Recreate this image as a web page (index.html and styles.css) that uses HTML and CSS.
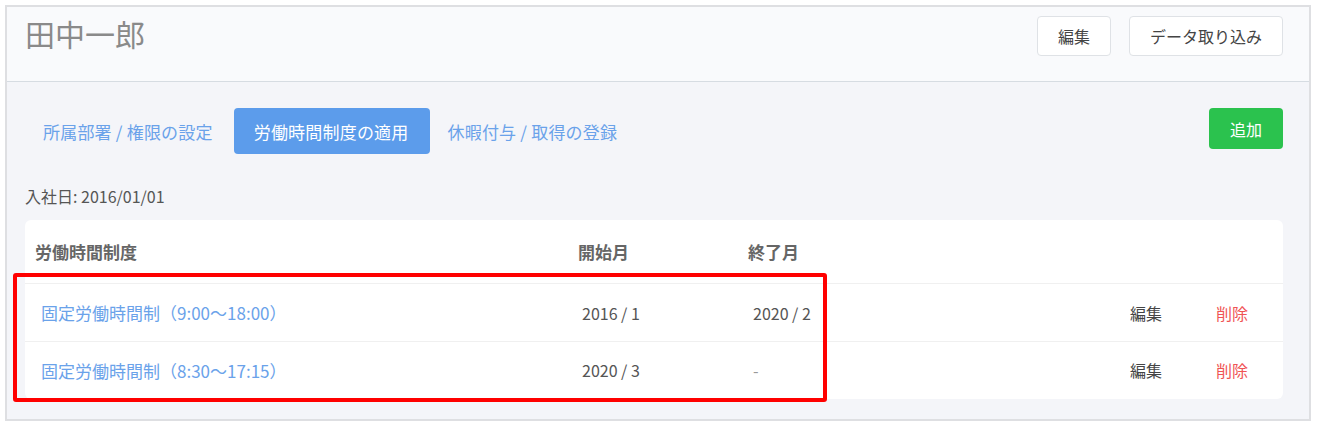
FILE: index.html
```html
<!DOCTYPE html>
<html lang="ja">
<head>
<meta charset="utf-8">
<link rel="stylesheet" href="styles.css">
</head>
<body>
<div class="frame">
  <header class="head">
    <h1 class="name">田中一郎</h1>
    <div class="head-actions">
      <button class="btn">編集</button>
      <button class="btn">データ取り込み</button>
    </div>
  </header>
  <main class="content">
    <div class="toolbar">
      <nav class="tabs">
        <a class="tab">所属部署 / 権限の設定</a>
        <a class="tab active">労働時間制度の適用</a>
        <a class="tab">休暇付与 / 取得の登録</a>
      </nav>
      <button class="btn-add">追加</button>
    </div>
    <p class="joined">入社日: 2016/01/01</p>
    <div class="card">
      <div class="thead">
        <div>労働時間制度</div>
        <div>開始月</div>
        <div>終了月</div>
      </div>
      <div class="row">
        <a class="link">固定労働時間制（9:00〜18:00）</a>
        <div>2016 / 1</div>
        <div>2020 / 2</div>
        <a class="act">編集</a>
        <a class="del">削除</a>
      </div>
      <div class="row">
        <a class="link">固定労働時間制（8:30〜17:15）</a>
        <div>2020 / 3</div>
        <div class="dash">-</div>
        <a class="act">編集</a>
        <a class="del">削除</a>
      </div>
    </div>
  </main>
  <div class="highlight"></div>
</div>
</body>
</html>
```

FILE: styles.css
```css
* { box-sizing: border-box; }
html, body { margin: 0; padding: 0; background: #ffffff; }
body {
  font-family: "Noto Sans CJK JP", "Noto Sans", sans-serif;
  color: #555;
}
.frame {
  position: relative;
  margin: 5px 0 0 5px;
  width: 1306px;
  height: 416px;
  border: 2px solid #dedfe2;
  background: #f4f5f9;
}
.head {
  height: 75px;
  background: #f9fafc;
  border-bottom: 1px solid #d6dce2;
  display: flex;
  justify-content: space-between;
  align-items: flex-start;
  padding: 0 26px 0 18px;
}
.name {
  margin: 6px 0 0;
  font-size: 30px;
  font-weight: 400;
  color: #8a8a8a;
  line-height: 40px;
}
.head-actions {
  display: flex;
  gap: 18px;
  margin-top: 9px;
}
.btn {
  height: 40px;
  padding: 0 20px;
  background: #fff;
  border: 1px solid #dfe2e6;
  border-radius: 4px;
  font-family: inherit;
  font-size: 16px;
  color: #444;
}
.content {
  padding: 26px 26px 0 18px;
}
.toolbar {
  display: flex;
  justify-content: space-between;
  align-items: flex-start;
}
.tabs { display: flex; gap: 0; }
.tab {
  height: 46px;
  display: flex;
  align-items: center;
  padding: 0 21px 0 18px;
  font-size: 17px;
  letter-spacing: 0.2px;
  color: #6aa2ea;
  border-radius: 4px;
}
.tab.active {
  padding: 0 21px 0 20px;
  background: #5c9ceb;
  color: #fff;
}
.btn-add {
  width: 74px;
  height: 41px;
  background: #2bc24e;
  border: none;
  border-radius: 4px;
  color: #fff;
  font-family: inherit;
  font-size: 16px;
}
.joined {
  margin: 32px 0 0;
  font-size: 16px;
  line-height: 20px;
  color: #555;
}
.card {
  margin-top: 14px;
  background: #fff;
  border-radius: 6px;
  height: 179px;
}
.thead {
  display: grid;
  grid-template-columns: 543px 170px 1fr;
  height: 64px;
  align-items: center;
  padding-left: 10px;
  font-size: 17px;
  font-weight: 700;
  color: #666;
  border-bottom: 1px solid #f0f0f0;
}
.row {
  display: grid;
  grid-template-columns: 541px 171px 377px 86px 1fr;
  height: 57px;
  align-items: center;
  padding-left: 16px;
  font-size: 16px;
  color: #555;
}
.row + .row { border-top: 1px solid #f0f0f0; }
.link { color: #6aa2ea; font-size: 17px; }
.dash { color: #999; }
.act { color: #444; }
.del { color: #f05454; }
.highlight {
  position: absolute;
  left: 6px;
  top: 266px;
  width: 814px;
  height: 129px;
  border: 4px solid #ff0000;
  border-radius: 3px;
}
```
